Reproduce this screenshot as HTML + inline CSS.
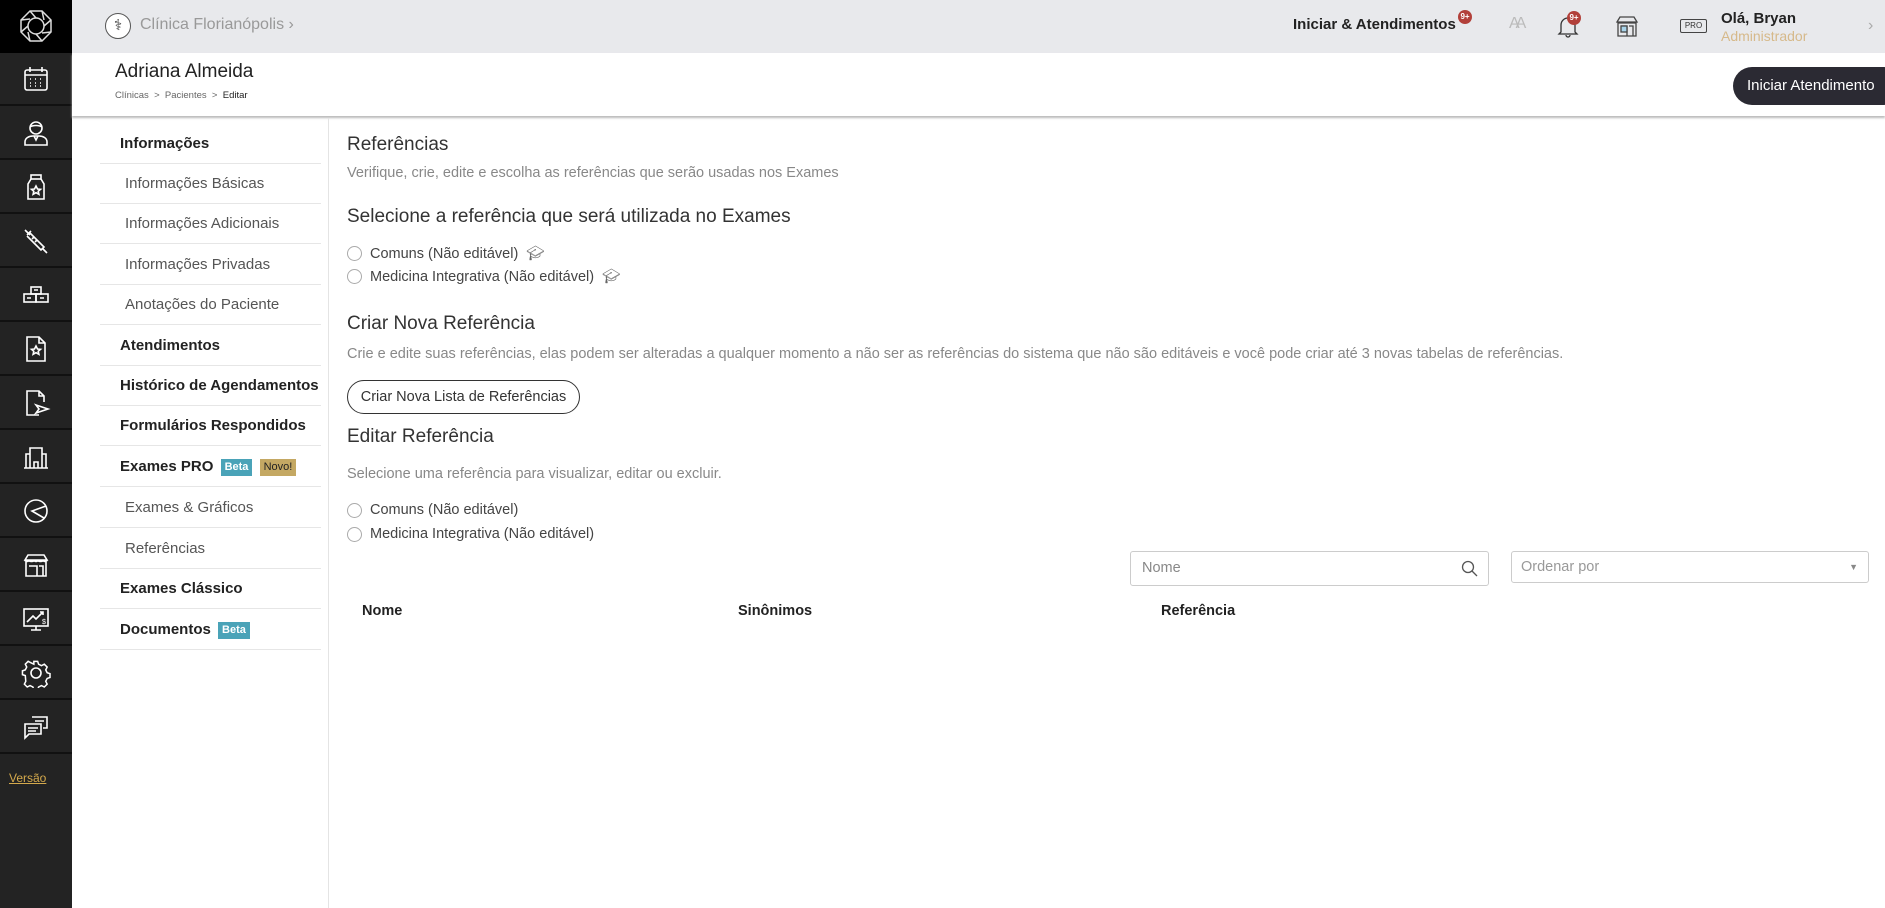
<!DOCTYPE html>
<html><head><meta charset="utf-8"><style>
*{box-sizing:border-box;margin:0;padding:0}
body{width:1885px;height:908px;overflow:hidden;background:#fff;font-family:"Liberation Sans",sans-serif;color:#333;position:relative}
.abs{position:absolute}
#side{left:0;top:0;width:72px;height:908px;background:#232323}
#side .logo{left:0;top:0;width:72px;height:53px;background:#000}
.cell{position:absolute;left:0;width:72px;height:53px;border-bottom:2px solid #111;display:flex;align-items:center;justify-content:center}
.cell svg{width:30px;height:30px;fill:none;stroke:#fff;stroke-width:1.6}
#hdr{left:72px;top:0;width:1813px;height:53px;background:#e8e9ec}
#sub{left:72px;top:53px;width:1813px;height:63px;background:#fff;box-shadow:0 2px 2px #bbb}
.menu{position:absolute;left:100px;width:221px;height:40px;border-bottom:1px solid #e6e6e6;font-size:15px;line-height:40px}
.menu.b{font-weight:bold;color:#222;padding-left:20px}
.menu.s{color:#555;padding-left:25px}
.badge{display:inline-block;font-size:11px;line-height:17px;padding:0 4px;color:#fff;background:#4aa3b8;font-weight:bold;vertical-align:1px;margin-left:3px}
.nov{background:#c4a863;color:#222;font-weight:normal}
.h{position:absolute;left:347px;font-size:19px;color:#333}
.p{position:absolute;left:347px;font-size:14.5px;color:#888}
.r{position:absolute;left:347px;font-size:14.5px;color:#444;display:flex;align-items:center}
.r i{width:15px;height:15px;border:1px solid #aaa;border-radius:50%;margin-right:8px;display:inline-block}
</style></head><body>
<div id="side" class="abs">
 <div class="logo abs"><svg class="abs" style="left:19px;top:9px" width="34" height="34" viewBox="0 0 34 34" fill="none" stroke="#ddd" stroke-width="1.5"><polygon points="11,2 23,2 32,11 32,23 23,32 11,32 2,23 2,11"/><circle cx="17" cy="17" r="8"/><path d="M11,2L17,9M23,2L25,11M32,11L25,17M32,23L23,24M23,32L17,25M11,32L9,23M2,23L9,17M2,11L11,10"/></svg></div>
 <div class="cell" style="top:53px"><svg viewBox="0 0 30 30"><rect x="4" y="6" width="22" height="20" rx="2"/><path d="M4 11h22M9 3v5M21 3v5M9 15h1M14 15h1M19 15h1M9 19h1M14 19h1M19 19h1M9 22h1M14 22h1M19 22h1"/></svg></div>
 <div class="cell" style="top:107px"><svg viewBox="0 0 30 30"><circle cx="15" cy="10" r="6"/><path d="M9 9c3-2 9-2 12 0M4 27v-3c0-4 4-6 8-6h6c4 0 8 2 8 6v3zM13 18l2 4 2-4"/></svg></div>
 <div class="cell" style="top:161px"><svg viewBox="0 0 30 30"><rect x="10" y="3" width="10" height="4"/><path d="M10 7l-3 5v15h16V12l-3-5"/><path d="M15 14l1.5 3 3 .3-2.3 2 .7 3-2.9-1.6-2.9 1.6.7-3-2.3-2 3-.3z"/></svg></div>
 <div class="cell" style="top:215px"><svg viewBox="0 0 30 30"><path d="M4 4l5 5M6 9l4-4M9 7l14 14-3 3L6 10M21 22l5 5M13 11l-2 2M16 14l-2 2"/></svg></div>
 <div class="cell" style="top:269px"><svg viewBox="0 0 30 30"><rect x="10" y="7" width="10" height="7"/><rect x="3" y="14" width="12" height="8"/><rect x="15" y="14" width="12" height="8"/><path d="M13 10h4M6 18h4M19 18h4"/></svg></div>
 <div class="cell" style="top:323px"><svg viewBox="0 0 30 30"><path d="M6 3h12l6 6v18H6zM18 3v6h6"/><path d="M15 12l1.5 3 3 .3-2.3 2 .7 3-2.9-1.6-2.9 1.6.7-3-2.3-2 3-.3z"/></svg></div>
 <div class="cell" style="top:377px"><svg viewBox="0 0 30 30"><path d="M18 27H6V3h12l5 5v6M18 3v5h5M15 17l12 4-12 4 3-4z"/></svg></div>
 <div class="cell" style="top:431px"><svg viewBox="0 0 30 30"><path d="M3 26h24M5 26V12h4v14M9 26V6h12v20M21 26V12h4v14M13 26v-6h4v6"/></svg></div>
 <div class="cell" style="top:485px"><svg viewBox="0 0 30 30"><circle cx="15" cy="15" r="11"/><path d="M25 10l-14 5 12 7"/></svg></div>
 <div class="cell" style="top:539px"><svg viewBox="0 0 30 30"><path d="M4 10l3-5h16l3 5zM4 10c0 2 4 2 4 0 0 2 5 2 5 0 0 2 4 2 4 0 0 2 5 2 5 0 0 2 4 2 4 0M5 12v14h20V12M8 16h8v10M18 16h4v10"/></svg></div>
 <div class="cell" style="top:593px"><svg viewBox="0 0 30 30"><rect x="3" y="5" width="24" height="17"/><path d="M15 22v4M10 26h10M6 18l6-6 3 3 7-7M19 8h3v3"/><text x="21" y="20" fill="#fff" stroke="none" font-size="7">$</text></svg></div>
 <div class="cell" style="top:647px"><svg viewBox="0 0 30 30"><circle cx="15" cy="15" r="5"/><path d="M13 3h4l1 3 3 1.5 3-1.5 3 3-1.5 3 1.5 3 3 1v4l-3 1-1.5 3 1.5 3-3 3-3-1.5-3 1.5-1 3h-4l-1-3-3-1.5-3 1.5-3-3 1.5-3L4 18l-3-1v-4l3-1 1.5-3L4 6l3-3 3 1.5L13 6z" transform="translate(0.5 0.5) scale(.95)"/></svg></div>
 <div class="cell" style="top:701px"><svg viewBox="0 0 30 30"><path d="M11 5h15v11h-4M4 12h16v10H8l-4 4z M14 9h9M7 16h10M7 19h8"/></svg></div>
 <div class="abs" style="left:9px;top:771px;font-size:12px;color:#d4a94c;text-decoration:underline">Versão</div>
</div>

<div id="hdr" class="abs">
 <div class="abs" style="left:33px;top:13px;width:26px;height:26px;border-radius:50%;background:#fff;border:1px solid #555;font-size:15px;text-align:center;line-height:24px;color:#333">⚕</div>
 <div class="abs" style="left:68px;top:16px;font-size:16px;color:#999">Clínica Florianópolis ›</div>
 <div class="abs" style="left:1221px;top:16px;font-size:15px;font-weight:bold;color:#222">Iniciar &amp; Atendimentos</div>
 <div class="abs" style="left:1386px;top:10px;width:14px;height:14px;border-radius:50%;background:#b2403a;color:#fff;font-size:8px;font-weight:bold;text-align:center;line-height:14px">9+</div>
 <div class="abs" style="left:1437px;top:15px;font-size:16px;color:#bbb;letter-spacing:-4px">AA</div>
 <svg class="abs" style="left:1485px;top:14px" width="22" height="24" viewBox="0 0 22 24" fill="none" stroke="#333" stroke-width="1.3"><path d="M4 18V11a7 7 0 0114 0v7l2 2H2zM9 21a2 2 0 004 0"/></svg>
 <div class="abs" style="left:1495px;top:11px;width:14px;height:14px;border-radius:50%;background:#b2403a;color:#fff;font-size:8px;font-weight:bold;text-align:center;line-height:14px">9+</div>
 <svg class="abs" style="left:1543px;top:14px" width="24" height="24" viewBox="0 0 24 24" fill="none" stroke="#444" stroke-width="1.3"><path d="M2 8l3-5h14l3 5zM3 9h18v13H3zM6 12h6v10M14 12h4v10" /><rect x="6" y="12" width="6" height="6" fill="#a9d4ea" stroke="#444"/></svg>
 <div class="abs" style="left:1608px;top:19px;width:27px;height:14px;border:1px solid #444;border-radius:2px;font-size:8px;text-align:center;line-height:12px;color:#333">PRO</div>
 <div class="abs" style="left:1649px;top:10px;font-size:15px;font-weight:bold;color:#222">Olá, Bryan</div>
 <div class="abs" style="left:1649px;top:28px;font-size:14px;color:#d6b98a">Administrador</div>
 <div class="abs" style="left:1796px;top:17px;font-size:16px;color:#aaa">›</div>
</div>

<div id="sub" class="abs">
 <div class="abs" style="left:43px;top:8px;font-size:19px;color:#222">Adriana Almeida</div>
 <div class="abs" style="left:43px;top:37px;font-size:9.5px;color:#666">Clínicas &nbsp;&gt;&nbsp; Pacientes &nbsp;&gt;&nbsp; <span style="color:#222">Editar</span></div>
 <div class="abs" style="left:1661px;top:14px;width:170px;height:38px;border-radius:19px;background:#2b2a33;color:#fff;font-size:15px;line-height:38px;padding-left:14px">Iniciar Atendimento</div>
</div>

<div class="abs" style="left:328px;top:118px;width:1px;height:790px;background:#e4e4e4"></div>

<div class="menu b" style="top:124px">Informações</div>
<div class="menu s" style="top:164px">Informações Básicas</div>
<div class="menu s" style="top:204px">Informações Adicionais</div>
<div class="menu s" style="top:245px">Informações Privadas</div>
<div class="menu s" style="top:285px">Anotações do Paciente</div>
<div class="menu b" style="top:326px">Atendimentos</div>
<div class="menu b" style="top:366px">Histórico de Agendamentos</div>
<div class="menu b" style="top:406px">Formulários Respondidos</div>
<div class="menu b" style="top:447px">Exames PRO <span class="badge">Beta</span> <span class="badge nov">Novo!</span></div>
<div class="menu s" style="top:488px">Exames &amp; Gráficos</div>
<div class="menu s" style="top:529px">Referências</div>
<div class="menu b" style="top:569px">Exames Clássico</div>
<div class="menu b" style="top:610px">Documentos <span class="badge">Beta</span></div>

<div class="h" style="top:134px">Referências</div>
<div class="p" style="top:165px">Verifique, crie, edite e escolha as referências que serão usadas nos Exames</div>
<div class="h" style="top:206px">Selecione a referência que será utilizada no Exames</div>
<div class="r" style="top:245px"><i></i>Comuns (Não editável) <span style="margin-left:8px;color:#666">🎓︎</span></div>
<div class="r" style="top:268px"><i></i>Medicina Integrativa (Não editável) <span style="margin-left:8px;color:#666">🎓︎</span></div>
<div class="h" style="top:313px">Criar Nova Referência</div>
<div class="p" style="top:346px">Crie e edite suas referências, elas podem ser alteradas a qualquer momento a não ser as referências do sistema que não são editáveis e você pode criar até 3 novas tabelas de referências.</div>
<div class="abs" style="left:347px;top:380px;width:233px;height:34px;border:1px solid #333;border-radius:17px;font-size:14.5px;color:#333;text-align:center;line-height:32px">Criar Nova Lista de Referências</div>
<div class="h" style="top:426px">Editar Referência</div>
<div class="p" style="top:466px">Selecione uma referência para visualizar, editar ou excluir.</div>
<div class="r" style="top:502px"><i></i>Comuns (Não editável)</div>
<div class="r" style="top:526px"><i></i>Medicina Integrativa (Não editável)</div>

<div class="abs" style="left:1130px;top:551px;width:359px;height:35px;border:1px solid #ccc;border-radius:3px;font-size:14.5px;color:#888;line-height:33px;padding-left:11px">Nome
 <svg class="abs" style="right:10px;top:8px" width="17" height="17" viewBox="0 0 17 17" fill="none" stroke="#555" stroke-width="1.3"><circle cx="7" cy="7" r="5.5"/><path d="M11 11l5 5"/></svg></div>
<div class="abs" style="left:1511px;top:551px;width:358px;height:32px;border:1px solid #ccc;border-radius:3px;font-size:14.5px;color:#999;line-height:30px;padding-left:9px">Ordenar por<span class="abs" style="right:10px;top:0;font-size:9px;color:#888">▼</span></div>

<div class="abs" style="left:362px;top:603px;font-size:14.5px;font-weight:bold;color:#222">Nome</div>
<div class="abs" style="left:738px;top:603px;font-size:14.5px;font-weight:bold;color:#222">Sinônimos</div>
<div class="abs" style="left:1161px;top:603px;font-size:14.5px;font-weight:bold;color:#222">Referência</div>
</body></html>
